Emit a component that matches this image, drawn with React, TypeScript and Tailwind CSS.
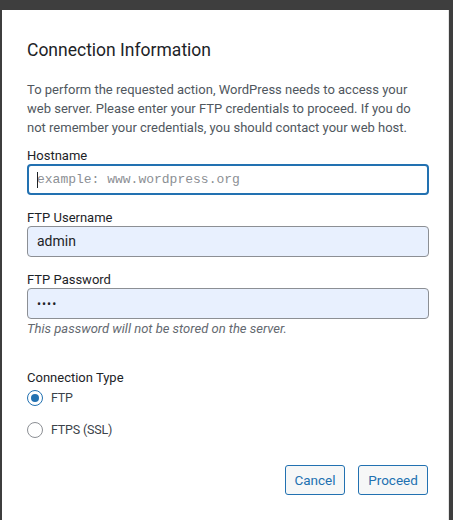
import React from "react";

const sans = { fontFamily: "Roboto, 'Noto Sans', sans-serif" };

function Label({ children }: { children: React.ReactNode }) {
  return <div className="text-[13px] leading-[16px] text-[#1d2327]">{children}</div>;
}

function Radio({ checked, label }: { checked?: boolean; label: string }) {
  return (
    <div className="flex items-center gap-[8px] h-[16px]">
      <span
        className={
          "w-[16px] h-[16px] rounded-full border flex items-center justify-center bg-white " +
          (checked ? "border-[#2271b1]" : "border-[#8c8f94]")
        }
      >
        {checked && <span className="w-[8px] h-[8px] rounded-full bg-[#2271b1]" />}
      </span>
      <span className="text-[12.5px] tracking-[-0.2px] text-[#3c434a]">{label}</span>
    </div>
  );
}

export default function App() {
  return (
    <div className="w-[453px] h-[520px] bg-[#3e3e3e] pt-[10px] pl-[2px] pr-[4px] overflow-hidden" style={sans}>
      <div className="h-full bg-white pl-[25px] pr-[19px] border-r border-[#e5e5e5]">
        <h2 className="pt-[28px] text-[17.5px] leading-[24px] text-[#1d2327]">Connection Information</h2>
        <p className="mt-[18px] text-[13px] leading-[19px] text-[#50575e]">
          To perform the requested action, WordPress needs to access your web server. Please enter your FTP
          credentials to proceed. If you do not remember your credentials, you should contact your web host.
        </p>

        <div className="mt-[11px]">
          <Label>Hostname</Label>
          <div className="relative h-[31px] rounded-[4px] border-2 border-[#2271b1] flex items-center pl-[8px]">
            <span className="absolute left-[8px] top-[6px] w-px h-[16px] bg-[#1d2327]" />
            <span
              className="text-[13px] text-[#8c8f94]"
              style={{ fontFamily: "'Liberation Mono', monospace" }}
            >
              example: www.wordpress.org
            </span>
          </div>
        </div>

        <div className="mt-[15px]">
          <Label>FTP Username</Label>
          <div className="h-[31px] rounded-[4px] border border-[#8c8f94] bg-[#e8f0fe] flex items-center pl-[9px] text-[14px] text-[#1d2327]">
            admin
          </div>
        </div>

        <div className="mt-[15px]">
          <Label>FTP Password</Label>
          <div className="h-[31px] rounded-[4px] border border-[#8c8f94] bg-[#e8f0fe] flex items-center pl-[9px] text-[12px] tracking-[1px] text-[#1d2327]">
            ••••
          </div>
          <div className="mt-[1px] text-[13px] leading-[18px] italic text-[#646970]">
            This password will not be stored on the server.
          </div>
        </div>

        <div className="mt-[32px]">
          <Label>Connection Type</Label>
          <div className="mt-[4px] flex flex-col gap-[16px]">
            <Radio checked label="FTP" />
            <Radio label="FTPS (SSL)" />
          </div>
        </div>

        <div className="mt-[27px] flex justify-end gap-[13px] pr-[1px]">
          <button className="w-[60px] h-[30px] rounded-[3px] border border-[#2271b1] bg-[#f6f7f7] text-[13.5px] text-[#2271b1]">
            Cancel
          </button>
          <button className="w-[70px] h-[30px] rounded-[3px] border border-[#2271b1] bg-[#f6f7f7] text-[13.5px] text-[#2271b1]">
            Proceed
          </button>
        </div>
      </div>
    </div>
  );
}
